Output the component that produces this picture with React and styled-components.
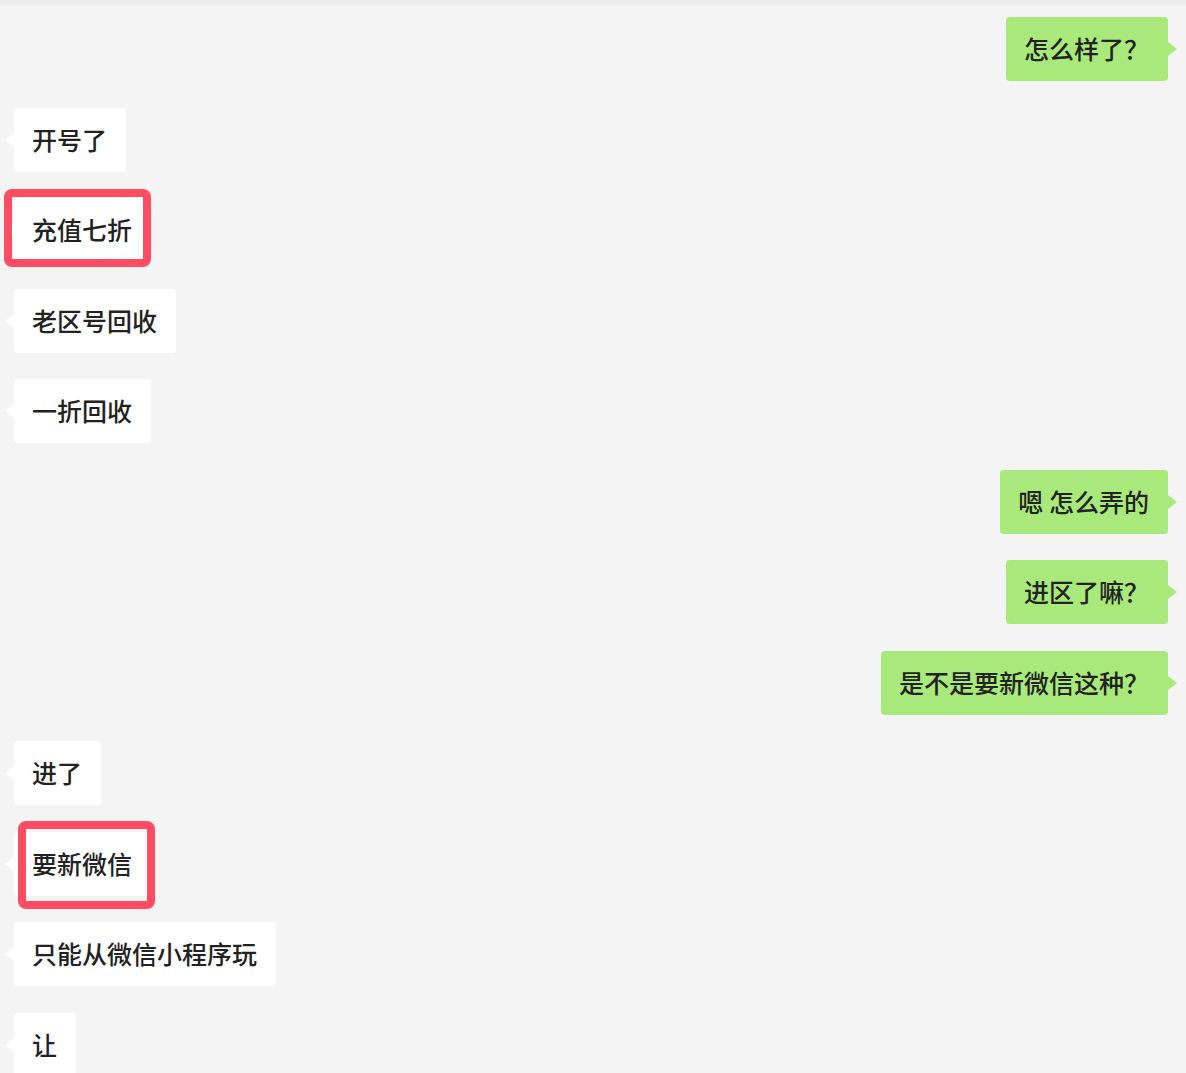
import React from "react";
import styled, { createGlobalStyle, css } from "styled-components";

const Global = createGlobalStyle`
  html, body { margin: 0; padding: 0; background: #f4f4f4; }
  body { overflow: hidden; font-family: "Noto Sans CJK SC", "Noto Sans", sans-serif; }
`;

const Page = styled.div`
  width: 1186px;
  height: 1073px;
  background: #f4f4f4;
  border-top: 5px solid #ececec;
  box-sizing: border-box;
  overflow: hidden;
`;

const Thread = styled.div`
  display: flex;
  flex-direction: column;
  gap: 26.5px;
  padding: 12px 18px 0 14px;
`;

const Row = styled.div`
  display: flex;
  justify-content: ${(p) => (p.$mine ? "flex-end" : "flex-start")};
`;

const Bubble = styled.div`
  position: relative;
  height: 64px;
  line-height: 63px;
  padding: 0 19px 0 18px;
  border-radius: 4px;
  font-size: 25px;
  font-weight: 500;
  color: #222222;
  white-space: pre;
  background: ${(p) => (p.$mine ? "#a9e97b" : "#ffffff")};

  &::before {
    content: "";
    position: absolute;
    top: 50%;
    margin-top: -7px;
    border: 7px solid transparent;
    ${(p) =>
      p.$mine
        ? css`
            right: -9px;
            border-left: 9px solid #a9e97b;
            border-right-width: 0;
          `
        : css`
            left: -9px;
            border-right: 9px solid #ffffff;
            border-left-width: 0;
          `}
  }

  ${(p) =>
    p.$box &&
    css`
      &::after {
        content: "";
        position: absolute;
        top: ${p.$box[0]}px;
        right: ${p.$box[1]}px;
        bottom: ${p.$box[2]}px;
        left: ${p.$box[3]}px;
        border: 8px solid #fe4d63;
        border-radius: 8px;
        pointer-events: none;
      }
    `}
`;

const messages = [
  { mine: true, text: "怎么样了？" },
  { text: "开号了" },
  { text: "充值七折", box: [-9, 0, -5, -10] },
  { text: "老区号回收" },
  { text: "一折回收" },
  { mine: true, text: "嗯 怎么弄的" },
  { mine: true, text: "进区了嘛？" },
  { mine: true, text: "是不是要新微信这种？" },
  { text: "进了" },
  { text: "要新微信", box: [-11, -4, -13, 4] },
  { text: "只能从微信小程序玩" },
  { text: "让" },
];

export default function App() {
  return (
    <>
      <Global />
      <Page>
        <Thread>
          {messages.map((m, i) => (
            <Row key={i} $mine={m.mine}>
              <Bubble $mine={m.mine} $box={m.box}>
                {m.text}
              </Bubble>
            </Row>
          ))}
        </Thread>
      </Page>
    </>
  );
}
